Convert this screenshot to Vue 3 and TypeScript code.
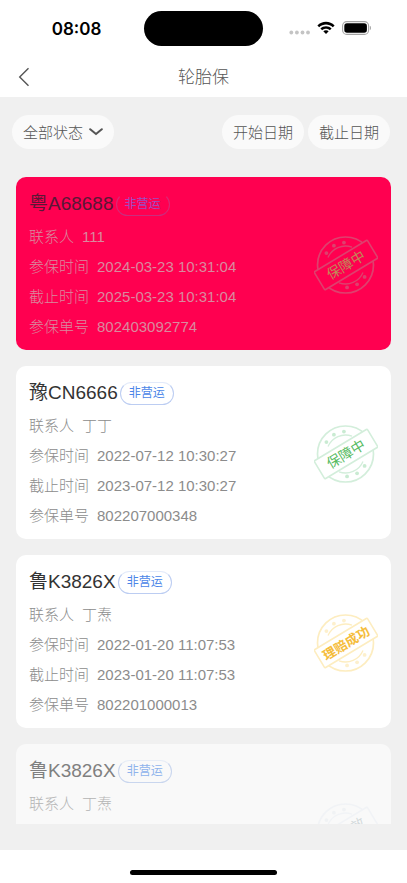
<script setup lang="ts">
import { ref } from 'vue'

type StampKind = 'active' | 'claimed' | 'expired'

interface Policy {
  id: number
  plate: string
  usage: string
  contact: string
  start?: string
  end?: string
  policyNo?: string
  stamp: StampKind
  highlighted?: boolean
  faded?: boolean
}

const stampText: Record<StampKind, string> = {
  active: '保障中',
  claimed: '理赔成功',
  expired: '已失效',
}

const status = ref('全部状态')
const statuses: string[] = ['全部状态', '保障中', '理赔成功', '已失效']

const policies: Policy[] = [
  { id: 1, plate: '粤A68688', usage: '非营运', contact: '111', start: '2024-03-23 10:31:04', end: '2025-03-23 10:31:04', policyNo: '802403092774', stamp: 'active', highlighted: true },
  { id: 2, plate: '豫CN6666', usage: '非营运', contact: '丁丁', start: '2022-07-12 10:30:27', end: '2023-07-12 10:30:27', policyNo: '802207000348', stamp: 'active' },
  { id: 3, plate: '鲁K3826X', usage: '非营运', contact: '丁焘', start: '2022-01-20 11:07:53', end: '2023-01-20 11:07:53', policyNo: '802201000013', stamp: 'claimed' },
  { id: 4, plate: '鲁K3826X', usage: '非营运', contact: '丁焘', stamp: 'expired', faded: true },
]

function rows(p: Policy): { label: string; value: string }[] {
  return [
    { label: '联系人', value: p.contact },
    { label: '参保时间', value: p.start ?? '' },
    { label: '截止时间', value: p.end ?? '' },
    { label: '参保单号', value: p.policyNo ?? '' },
  ].filter((r) => r.value !== '')
}

const dotAngles: number[] = [-148, -121, -94, 32, 59, 86]
const dots = dotAngles.map((a) => ({
  x: 31.5 + 22.5 * Math.cos((a * Math.PI) / 180),
  y: 31 + 22.5 * Math.sin((a * Math.PI) / 180),
}))
</script>

<template>
  <div class="app">
    <div class="status-bar">
      <div class="side"><span class="clock">08:08</span></div>
      <div class="island"></div>
      <div class="side indicators">
        <svg class="signal" width="21" height="5" viewBox="0 0 21 5" aria-hidden="true">
          <circle cx="2.3" cy="2.5" r="1.9" /><circle cx="7.9" cy="2.5" r="1.9" />
          <circle cx="13.5" cy="2.5" r="1.9" /><circle cx="19" cy="2.5" r="1.9" />
        </svg>
        <svg width="18" height="14" viewBox="0 0 18 14" aria-hidden="true">
          <path d="M0.4 4.4C5.1 -0.4 12.9 -0.4 17.6 4.4L15.8 6.2C12 2.6 6 2.6 2.200 6.2Z" />
          <path d="M3.4 7.4C6.400 4.4 11.6 4.4 14.6 7.4L12.8 9.2C10.700 7.200 7.300 7.2 5.200 9.2Z" />
          <path d="M6.3 10.3C7.8 8.9 10.2 8.9 11.7 10.3L9 13Z" />
        </svg>
        <svg width="30" height="14" viewBox="0 0 30 14" aria-hidden="true">
          <rect x="0.6" y="0.6" width="26" height="12.8" rx="4.2" fill="none" stroke="#a4a4a4" stroke-width="1.1" />
          <rect x="2.3" y="2.3" width="22.6" height="9.4" rx="2.7" />
          <path d="M27.9 4.8C29.4 5.4 29.4 8.6 27.9 9.2Z" fill="#a4a4a4" />
        </svg>
      </div>
    </div>

    <header class="nav">
      <button class="back" type="button" aria-label="返回">
        <svg width="12" height="20" viewBox="0 0 12 20" aria-hidden="true">
          <path d="M10.5 1.2L1.7 10L10.5 18.8" fill="none" stroke="#555" stroke-width="1.4" />
        </svg>
      </button>
      <h1>轮胎保</h1>
      <span></span>
    </header>

    <main class="content">
      <div class="filters">
        <label class="select-pill">
          <select v-model="status" aria-label="状态">
            <option v-for="s in statuses" :key="s" :value="s">{{ s }}</option>
          </select>
          <svg width="14" height="8" viewBox="0 0 14 8" aria-hidden="true">
            <path d="M1.2 1.2L7 6L12.8 1.2" fill="none" stroke="#555" stroke-width="2" stroke-linecap="round" />
          </svg>
        </label>
        <div class="dates">
          <button type="button">开始日期</button>
          <button type="button">截止日期</button>
        </div>
      </div>

      <div class="list">
        <article v-for="p in policies" :key="p.id" class="card" :class="{ highlighted: p.highlighted, faded: p.faded }">
          <div class="details">
            <div class="title">
              <h2>{{ p.plate }}</h2>
              <span class="badge">{{ p.usage }}</span>
            </div>
            <dl>
              <div v-for="r in rows(p)" :key="r.label" class="row">
                <dt>{{ r.label }}</dt>
                <dd>{{ r.value }}</dd>
              </div>
            </dl>
          </div>
          <svg class="stamp" :class="p.stamp" width="64" height="62" viewBox="0 0 64 62" role="img" :aria-label="stampText[p.stamp]">
            <g class="ring">
              <circle cx="31.5" cy="31" r="28" stroke-width="1.7" />
              <path d="M14 23.6A19 19 0 0 1 38 13.200" stroke-width="1.3" />
              <path d="M25 48.800A19 19 0 0 0 49 38.400" stroke-width="1.3" />
            </g>
            <circle v-for="(d, i) in dots" :key="i" class="dot" :cx="d.x" :cy="d.y" r="1.9" />
            <g transform="rotate(-31 32 31)">
              <rect class="plate" x="1" y="20.500" width="62" height="21" rx="1" stroke-width="1.600" />
              <text x="32" y="36" text-anchor="middle">{{ stampText[p.stamp] }}</text>
            </g>
          </svg>
        </article>
      </div>
    </main>

    <footer class="home"><div class="home-bar"></div></footer>
  </div>
</template>

<style>
body {
  margin: 0;
  background: #fff;
}
</style>

<style scoped>
.app {
  display: flex;
  flex-direction: column;
  height: 100vh;
  font-family: "Liberation Sans", "Noto Sans CJK SC", sans-serif;
  font-weight: 300;
  color: #555;
}
.status-bar {
  display: grid;
  grid-template-columns: 1fr 119px 1fr;
  align-items: center;
  height: 57px;
}
.side {
  display: flex;
  align-items: center;
  justify-content: center;
  padding-left: 9px;
}
.clock {
  font: 600 17px/24px Inter, sans-serif;
  color: #000;
}
.island {
  height: 35px;
  border-radius: 18px;
  background: #000;
}
.indicators {
  gap: 7px;
  padding: 0 10px 2px 0;
}
.signal {
  margin-top: 10px;
  fill: #c4c4c4;
}
.nav {
  display: grid;
  grid-template-columns: 44px 1fr 44px;
  align-items: center;
  height: 40px;
}
.nav h1 {
  margin: 0;
  padding-top: 2px;
  font-size: 17px;
  font-weight: 300;
  line-height: 24px;
  text-align: center;
}
button {
  border: 0;
  font: inherit;
  color: inherit;
}
.back {
  display: flex;
  align-items: center;
  height: 40px;
  padding: 0 0 0 18px;
  background: none;
}
.content {
  display: flex;
  flex: 1;
  flex-direction: column;
  min-height: 0;
  padding: 18px 16px 26px;
  background: #f0f0f0;
}
.filters {
  display: flex;
  justify-content: space-between;
  margin: 0 1px 28px -4px;
}
.select-pill,
.dates button {
  display: flex;
  align-items: center;
  box-sizing: border-box;
  height: 34px;
  padding: 0 11px;
  border-radius: 17px;
  background: #fafafa;
  font-size: 15px;
}
.dates button {
  padding-bottom: 2px;
}
.select-pill {
  gap: 6px;
}
.select-pill select {
  appearance: none;
  width: 60px;
  padding: 0;
  border: 0;
  background: none;
  font: inherit;
  color: inherit;
}
.dates {
  display: flex;
  gap: 4px;
}
.list {
  display: flex;
  flex: 1;
  flex-direction: column;
  gap: 16px;
  min-height: 0;
  overflow-y: auto;
  scrollbar-width: none;
}
.card {
  display: flex;
  flex: none;
  align-items: center;
  justify-content: space-between;
  padding: 11px 13px 8px;
  border-radius: 10px;
  background: #fff;
}
.title {
  display: flex;
  align-items: center;
  gap: 2px;
  height: 32px;
  margin-bottom: 2px;
}
.title h2 {
  margin: 0;
  font-size: 19px;
  font-weight: 400;
  line-height: 32px;
  color: #333;
}
.badge {
  padding: 0 8px;
  border: 1px solid #bccdf2;
  border-top-color: #e2eafa;
  border-radius: 12px;
  font-size: 12px;
  font-weight: 400;
  line-height: 21px;
  color: #4a85e8;
}
dl {
  margin: 0;
}
.row {
  display: flex;
  gap: 8px;
  font-size: 15px;
  line-height: 30px;
  color: #8c8c8c;
}
dd {
  margin: 0;
}
.stamp text {
  font-size: 14px;
  font-weight: 400;
}
.stamp.claimed text {
  font-size: 13px;
  font-weight: 700;
}
.ring {
  fill: none;
}
.plate {
  fill: #fff;
}
.active .ring,
.active .plate {
  stroke: #d3eedb;
}
.active .dot {
  fill: #c9ebd2;
}
.active text {
  fill: #57bb61;
}
.claimed .ring,
.claimed .plate {
  stroke: #fdedc0;
}
.claimed .dot {
  fill: #fdf0cd;
}
.claimed text {
  fill: #f5bd3c;
}
.expired .ring,
.expired .plate {
  stroke: #f1f3f6;
}
.expired .dot {
  fill: #f0f2f4;
}
.expired text {
  fill: #d3dadc;
}
.highlighted {
  background: #ff0050;
}
.highlighted h2 {
  color: #5b1736;
}
.highlighted .row {
  color: #d98a9e;
}
.highlighted .badge {
  border-color: #ff0050 #d92a78 #c92d7f;
  color: #9b4fc4;
}
.highlighted .plate {
  fill: #ff0050;
}
.highlighted .ring,
.highlighted .plate {
  stroke: #de406e;
}
.highlighted .dot {
  fill: #de406e;
}
.highlighted text {
  fill: #c08a57;
}
.faded {
  align-items: flex-start;
  min-height: 154px;
  background: #f9f9f9;
}
.faded h2 {
  color: #808080;
}
.faded .row {
  color: #b4b4b4;
}
.faded .badge {
  border-color: #e6ecf6 #c9d6ee #c9d6ee;
  color: #8eb3ec;
}
.faded .stamp {
  align-self: center;
}
.faded .plate {
  fill: #f9f9f9;
}
.home {
  display: flex;
  justify-content: center;
  padding: 20px 0 8px;
  background: #fff;
}
.home-bar {
  width: 36%;
  height: 5px;
  border-radius: 3px;
  background: #000;
}
</style>
